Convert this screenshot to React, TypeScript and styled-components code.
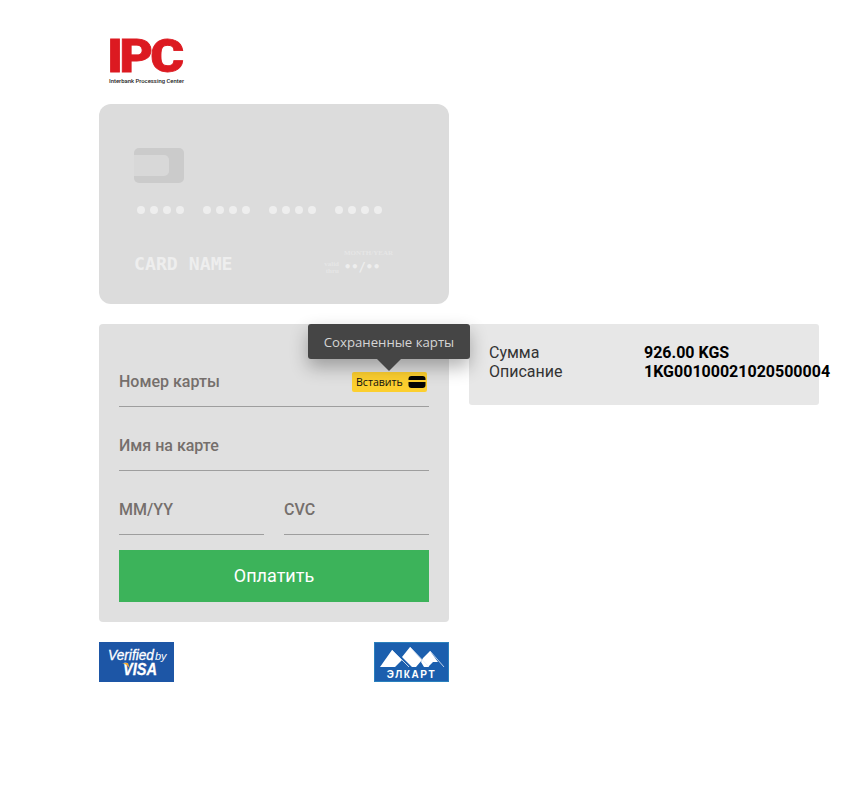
import React from "react";
import styled, { createGlobalStyle } from "styled-components";

const Global = createGlobalStyle`
  html, body { margin: 0; padding: 0; background: #fff; }
  body { font-family: Roboto, "Noto Sans", sans-serif; }
  * { box-sizing: border-box; }
`;

const Page = styled.div`
  width: 848px;
  height: 799px;
  padding: 26px 0 0 99px;
  overflow: hidden;
`;
const LogoRow = styled.div`
  height: 78px;
  padding-left: 6px;
  svg { display: block; }
`;
const Columns = styled.div`
  display: flex;
  align-items: flex-start;
  gap: 20px;
`;
const LeftColumn = styled.div`
  width: 350px;
  flex: none;
`;
const CardPreview = styled.div`
  width: 350px;
  height: 200px;
  background: #dcdcdc;
  border-radius: 12px;
  padding: 44px 35px 0;
  margin-bottom: 20px;
`;
const Chip = styled.div`
  width: 50px;
  height: 35px;
  background: #cbcbcb;
  border-radius: 5px;
  padding-top: 7px;
`;
const ChipInner = styled.div`
  width: 35px;
  height: 21px;
  background: #d8d8d8;
  border-radius: 0 5px 5px 0;
`;
const DotsRow = styled.div`
  display: flex;
  gap: 19px;
  margin: 23px 0 0 2.5px;
`;
const DotGroup = styled.div`
  display: flex;
  gap: 5px;
`;
const Dot = styled.span`
  width: 8px;
  height: 8px;
  border-radius: 50%;
  background: #eeeeee;
`;
const CardBottom = styled.div`
  display: flex;
  justify-content: space-between;
  align-items: flex-start;
  margin-top: 32px;
`;
const CardName = styled.div`
  font-family: "DejaVu Sans Mono", monospace;
  font-size: 18.2px;
  font-weight: 700;
  line-height: 24px;
  margin-top: 6px;
  color: #eeeeee;
`;
const Expiry = styled.div`
  width: 70px;
  margin: 3px 20px 0 0;
  display: grid;
  grid-template-columns: 15px 1fr;
  column-gap: 5px;
  font-family: "Liberation Serif", serif;
  color: #e6e6e6;
`;
const MonthYear = styled.div`
  grid-column: 2;
  font-size: 7px;
  line-height: 8px;
  font-weight: 700;
  white-space: nowrap;
`;
const Valid = styled.div`
  font-size: 7px;
  line-height: 7px;
  font-weight: 700;
  text-align: right;
  margin-top: 4px;
`;
const ExpiryValue = styled.div`
  font-family: "DejaVu Sans Mono", monospace;
  font-size: 12px;
  line-height: 16px;
  margin-top: 2px;
  white-space: nowrap;
  color: #eeeeee;
  font-weight: 700;
`;
const Form = styled.div`
  position: relative;
  height: 298px;
  background: #e0e0e0;
  border-radius: 4px;
  padding: 19px 20px 0;
`;
const Field = styled.div<{ $grow?: boolean }>`
  position: relative;
  height: 64px;
  border-bottom: 1px solid #9e9e9e;
  display: flex;
  align-items: flex-end;
  padding-bottom: 15px;
  font-size: 16px;
  line-height: 19px;
  font-weight: 500;
  color: #756f6c;
  flex: ${(p) => (p.$grow ? "1" : "none")};
`;
const SplitRow = styled.div`
  display: flex;
  gap: 20px;
`;
const PayButton = styled.div`
  margin-top: 15px;
  height: 52px;
  background: #3cb35a;
  color: #fff;
  font-size: 18px;
  padding-bottom: 2px;
  display: flex;
  align-items: center;
  justify-content: center;
`;
const InsertBadge = styled.div`
  position: absolute;
  right: 2px;
  top: 29px;
  width: 75px;
  height: 20px;
  background: #fccf2f;
  border-radius: 2px;
  display: flex;
  align-items: center;
  justify-content: space-between;
  padding: 0 1px 0 4px;
  font-family: "Open Sans", sans-serif;
  font-size: 10.6px;
  font-weight: 400;
  color: #111;
  svg { display: block; }
`;
const Tooltip = styled.div`
  position: absolute;
  left: 209px;
  top: 0;
  width: 162px;
  height: 35px;
  background: #454545;
  border-radius: 3px;
  color: #d5d5d5;
  font-family: "Open Sans", sans-serif;
  font-size: 13.2px;
  display: flex;
  align-items: center;
  justify-content: center;
  box-shadow: 0 8px 18px rgba(0, 0, 0, 0.3);
  z-index: 2;
  &::after {
    content: "";
    position: absolute;
    left: 69px;
    top: 35px;
    border-left: 12px solid transparent;
    border-right: 12px solid transparent;
    border-top: 12px solid #454545;
  }
`;
const Logos = styled.div`
  display: flex;
  justify-content: space-between;
  margin-top: 20px;
  svg { display: block; }
`;
const Summary = styled.div`
  width: 350px;
  height: 81px;
  margin-top: 220px;
  background: #e7e7e7;
  border-radius: 3px;
  padding: 19px 20px 0;
`;
const SummaryRow = styled.div`
  display: grid;
  grid-template-columns: 155px 1fr;
  font-size: 16px;
  line-height: 19px;
  color: #333;
  white-space: nowrap;
`;
const SummaryValue = styled.span`
  font-weight: 700;
  color: #000;
`;

const IpcLogo = () => (
  <svg width="88" height="62" viewBox="0 0 88 62">
    <text transform="scale(1.12 1)" x="2 12.9 40.5" y="46" fontFamily="Roboto, sans-serif" fontWeight="900" fontSize="46" fill="#dc1a21" stroke="#dc1a21" strokeWidth="0.8">IPC</text>
    <text x="4" y="56.5" fontFamily="Roboto, sans-serif" fontWeight="500" fontSize="5.6" fill="#222" textLength="75" lengthAdjust="spacingAndGlyphs">Interbank Processing Center</text>
  </svg>
);

const VisaLogo = () => (
  <svg width="75" height="40" viewBox="0 0 75 40">
    <rect width="75" height="40" fill="#1d56a6" />
    <text x="9" y="18" fontFamily="Liberation Sans, sans-serif" fontStyle="italic" fontSize="14" fill="#fff" stroke="#fff" strokeWidth="0.3" textLength="46" lengthAdjust="spacingAndGlyphs">Verified</text>
    <text x="56" y="18" fontFamily="Liberation Sans, sans-serif" fontStyle="italic" fontSize="11" fill="#fff">by</text>
    <text x="24" y="33" fontFamily="Liberation Sans, sans-serif" fontStyle="italic" fontWeight="700" fontSize="17" fill="#fff" stroke="#fff" strokeWidth="0.3" textLength="34" lengthAdjust="spacingAndGlyphs">VISA</text>
    <path d="M23 21 L29 21 L31 27 Q28 22 23 21Z" fill="#f3a82f" />
  </svg>
);

const ElcartLogo = () => (
  <svg width="75" height="40" viewBox="0 0 75 40">
    <rect width="75" height="40" fill="#2a80bd" />
    <rect x="1" y="1" width="73" height="38" fill="#1b5fae" />
    <path d="M6 25 L18 8 L28 18 L21 25Z M28 15 L36 5 L48 18 L42 25 L38 25 L28 15Z M49 16 L56 9 L64 20 L59 20 L54 25 L50 25 L47 20Z" fill="#fff" />
    <path d="M18 8 L35 25 M36 5 L55 25 M56 9 L70 25" stroke="#e6eef8" strokeWidth="0.8" fill="none" />
    <text x="37.5" y="36" textAnchor="middle" fontFamily="Liberation Sans, sans-serif" fontWeight="700" fontSize="10" letterSpacing="1.6" fill="#fff">ЭЛКАРТ</text>
  </svg>
);

const CardIcon = () => (
  <svg width="18" height="14" viewBox="0 0 18 14">
    <rect x="0.5" y="1" width="17" height="12" rx="3" fill="#050505" />
    <rect x="0" y="5" width="18" height="2" fill="#fccf2f" />
  </svg>
);

const groups = [0, 1, 2, 3];
const dots = [0, 1, 2, 3];

export default function App() {
  return (
    <>
      <Global />
      <Page>
        <LogoRow>
          <IpcLogo />
        </LogoRow>
        <Columns>
          <LeftColumn>
            <CardPreview>
              <Chip>
                <ChipInner />
              </Chip>
              <DotsRow>
                {groups.map((g) => (
                  <DotGroup key={g}>
                    {dots.map((d) => (
                      <Dot key={d} />
                    ))}
                  </DotGroup>
                ))}
              </DotsRow>
              <CardBottom>
                <CardName>CARD NAME</CardName>
                <Expiry>
                  <MonthYear>MONTH/YEAR</MonthYear>
                  <Valid>valid<br />thru</Valid>
                  <ExpiryValue>••/••</ExpiryValue>
                </Expiry>
              </CardBottom>
            </CardPreview>
            <Form>
              <Tooltip>Сохраненные карты</Tooltip>
              <Field>
                Номер карты
                <InsertBadge>
                  Вставить
                  <CardIcon />
                </InsertBadge>
              </Field>
              <Field>Имя на карте</Field>
              <SplitRow>
                <Field $grow>MM/YY</Field>
                <Field $grow>CVC</Field>
              </SplitRow>
              <PayButton>Оплатить</PayButton>
            </Form>
            <Logos>
              <VisaLogo />
              <ElcartLogo />
            </Logos>
          </LeftColumn>
          <Summary>
            <SummaryRow>
              <span>Сумма</span>
              <SummaryValue>926.00 KGS</SummaryValue>
            </SummaryRow>
            <SummaryRow>
              <span>Описание</span>
              <SummaryValue>1KG00100021020500004</SummaryValue>
            </SummaryRow>
          </Summary>
        </Columns>
      </Page>
    </>
  );
}
